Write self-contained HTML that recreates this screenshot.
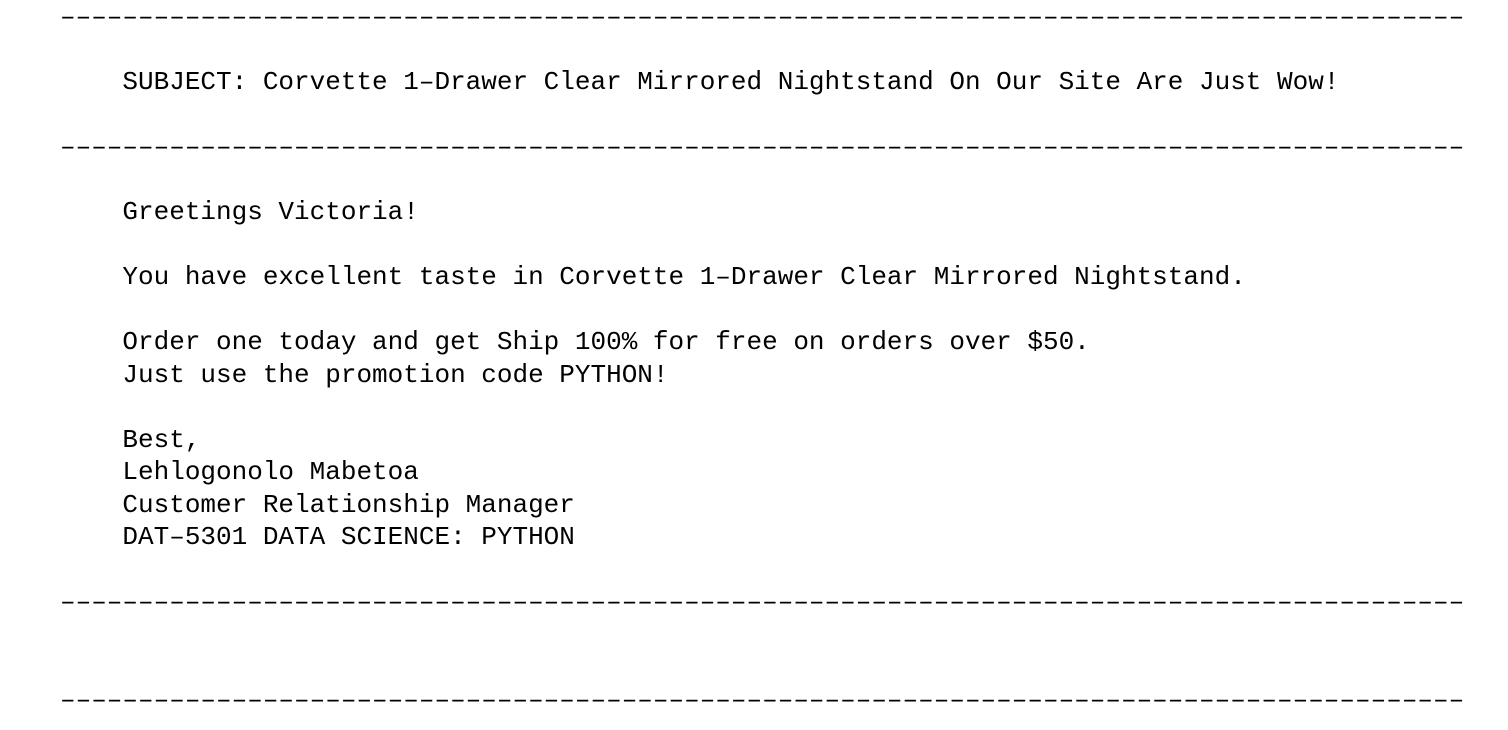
<!DOCTYPE html>
<html><head><meta charset="utf-8"><style>
html,body{margin:0;padding:0;background:#fff;width:1508px;height:730px;overflow:hidden}
pre{margin:0;position:absolute;left:60px;top:1px;font-family:"Liberation Mono",monospace;font-size:26px;line-height:32.5px;color:#000}
</style></head><body><pre>––––––––––––––––––––––––––––––––––––––––––––––––––––––––––––––––––––––––––––––––––––––––––

    SUBJECT: Corvette 1–Drawer Clear Mirrored Nightstand On Our Site Are Just Wow!

––––––––––––––––––––––––––––––––––––––––––––––––––––––––––––––––––––––––––––––––––––––––––

    Greetings Victoria!

    You have excellent taste in Corvette 1–Drawer Clear Mirrored Nightstand.

    Order one today and get Ship 100% for free on orders over $50.
    Just use the promotion code PYTHON!

    Best,
    Lehlogonolo Mabetoa
    Customer Relationship Manager
    DAT–5301 DATA SCIENCE: PYTHON

––––––––––––––––––––––––––––––––––––––––––––––––––––––––––––––––––––––––––––––––––––––––––


––––––––––––––––––––––––––––––––––––––––––––––––––––––––––––––––––––––––––––––––––––––––––</pre></body></html>
